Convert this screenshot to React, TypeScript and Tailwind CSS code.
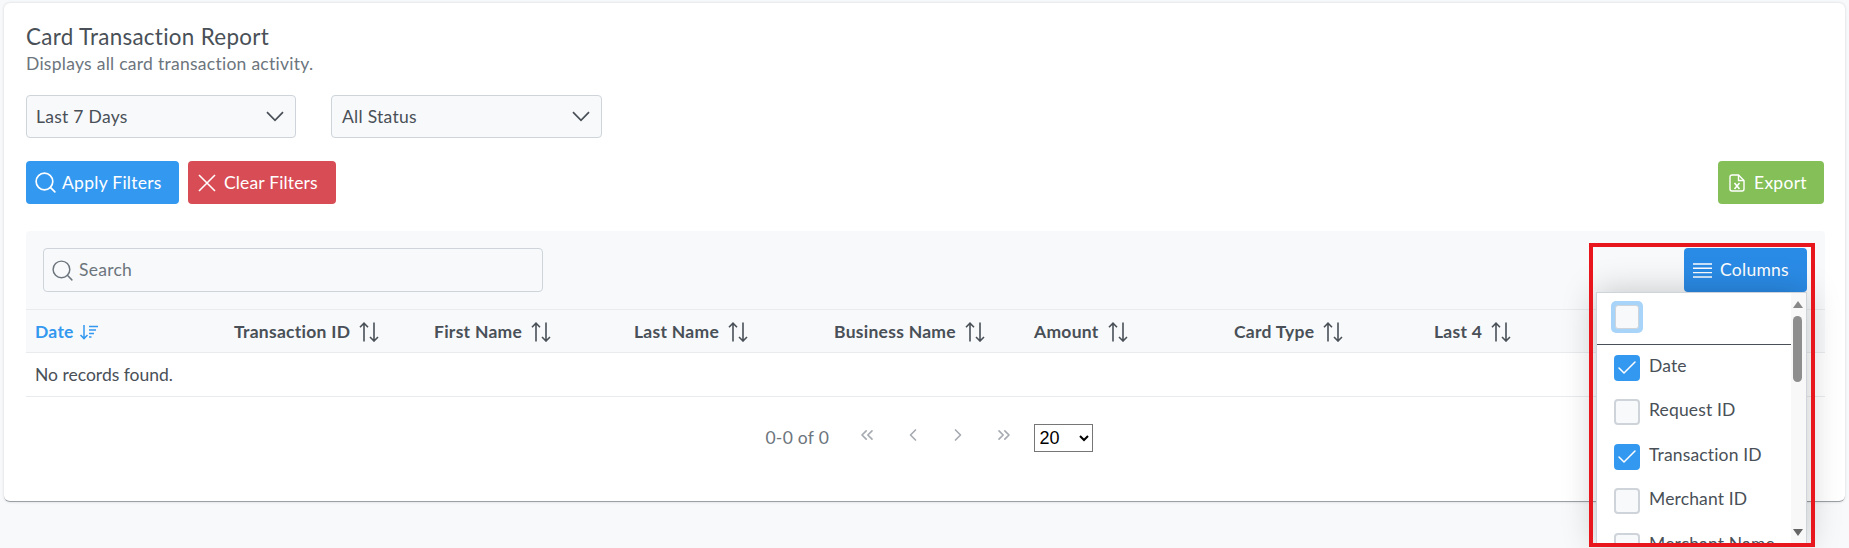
import React from "react";
import { Search, ChevronsLeft, ChevronLeft, ChevronRight, ChevronsRight, Check } from "lucide-react";

function SortIcon() {
  return (
    <svg width="20" height="20" viewBox="0 0 20 20" fill="none" stroke="currentColor" strokeWidth="1.6" className="ml-[9px] shrink-0">
      <path d="M5 19.5V1M1 5.2 5 1.2 9 5.2" />
      <path d="M15 .5V19M11 15l4 4 4-4" />
    </svg>
  );
}

function SortedIcon() {
  return (
    <svg width="20" height="16" viewBox="0 0 20 16" fill="none" stroke="currentColor" strokeWidth="1.5" className="ml-[5px] shrink-0">
      <path d="M5 1v13.5M1.5 11 5 14.6 8.5 11" />
      <path d="M10 2.5h9M10 6h7M10 9.5h5M10 13h2.5" />
    </svg>
  );
}

function ExcelIcon() {
  return (
    <svg width="16" height="18" viewBox="0 0 16 18" fill="none" stroke="currentColor" strokeWidth="1.4">
      <path d="M9.5 1H3a2 2 0 0 0-2 2v12a2 2 0 0 0 2 2h10a2 2 0 0 0 2-2V6.5z" />
      <path d="M9.5 1v5.5H15" />
      <path d="M5.5 9l5 6M10.5 9l-5 6" strokeWidth="1.6" />
    </svg>
  );
}

function Caret() {
  return (
    <svg width="18" height="11" viewBox="0 0 18 11" fill="none" stroke="currentColor" strokeWidth="1.7" className="text-[#495057]">
      <path d="M1 1.2 9 9.4l8-8.2" />
    </svg>
  );
}

function FakeSelect({ label, w, pl }: { label: string; w: string; pl: string }) {
  return (
    <div className={`${w} ${pl} h-[43px] flex items-center justify-between pr-[11px] bg-[#f8f9fb] border border-[#ced4da] rounded-[4px] text-[#495057]`}>
      <span className="pt-[2px]">{label}</span>
      <Caret />
    </div>
  );
}

const cols = ["Transaction ID", "First Name", "Last Name", "Business Name", "Amount", "Card Type", "Last 4"];

function Box({ checked }: { checked?: boolean }) {
  return (
    <div className={`w-[26px] h-[26px] shrink-0 rounded-[4px] flex items-center justify-center border-2 ${checked ? "bg-[#3398ef] border-[#3398ef]" : "bg-[#f8f9fb] border-[#ced4da]"}`}>
      {checked && <Check size={24} strokeWidth={1.5} className="text-white shrink-0" />}
    </div>
  );
}

const items: [string, boolean][] = [
  ["Date", true],
  ["Request ID", false],
  ["Transaction ID", true],
  ["Merchant ID", false],
];

export default function App() {
  return (
    <div className="w-[1849px] h-[548px] overflow-hidden bg-[#f8f9fb] pt-[3px] pl-[4px] pr-[4px] text-[17.5px] tracking-[0.27px] text-[#495057] relative font-['Lato',sans-serif]">
      <div className="h-[499px] bg-white rounded-[6px] border-b border-[#9aa0a6] shadow-[0_0_3px_rgba(0,0,0,0.15)] pt-[21px] px-[22px]">
        <h1 className="text-[22.4px] leading-[25px] tracking-[0.3px] text-[#495057]">Card Transaction Report</h1>
        <p className="text-[17.5px] leading-[24px] mt-[3px] text-[#6c757d]">Displays all card transaction activity.</p>

        <div className="flex gap-[35px] mt-[19px]">
          <FakeSelect label="Last 7 Days" w="w-[270px]" pl="pl-[9px]" />
          <FakeSelect label="All Status" w="w-[271px]" pl="pl-[10px]" />
        </div>

        <div className="flex mt-[23px] h-[43px]">
          <button className="w-[153px] flex items-center pl-[7px] gap-[4px] bg-[#3398ef] text-white rounded-[4px]">
            <Search size={25} strokeWidth={1.6} /> <span className="pt-[2px]">Apply Filters</span>
          </button>
          <button className="ml-[9px] w-[148px] flex items-center pl-[10px] gap-[8px] tracking-[0.15px] bg-[#d84c55] text-white rounded-[4px]">
            <svg width="18" height="18" viewBox="0 0 18 18" fill="none" stroke="currentColor" strokeWidth="1.6"><path d="M1 1l16 16M17 1 1 17" /></svg>
            <span className="pt-[2px]">Clear Filters</span>
          </button>
          <button className="ml-auto mr-[-1px] w-[106px] flex items-center pl-[11px] gap-[9px] bg-[#84bf58] text-white rounded-[4px]">
            <ExcelIcon /> <span className="pt-[2px]">Export</span>
          </button>
        </div>

        <div className="mt-[27px] bg-[#f8f9fb] rounded-t-[4px] h-[78px] flex items-center justify-between pl-[17px] pr-[18px] w-[1799px]">
          <div className="w-[500px] h-[44px] flex items-center gap-[4px] pl-[6px] border border-[#ced4da] rounded-[4px] text-[#6c757d]">
            <Search size={25} strokeWidth={1.4} />
            <span className="pt-[1px]">Search</span>
          </div>
          <button className="w-[123px] h-[44px] flex items-center pl-[9px] gap-[8px] bg-[#2a8be6] text-white rounded-[4px]">
            <svg width="19" height="15" viewBox="0 0 19 15" stroke="currentColor" strokeWidth="1.4"><path d="M0 1h19M0 5.3h19M0 9.6h19M0 14h19" /></svg>
            <span className="pt-[1px]">Columns</span>
          </button>
        </div>

        <div className="w-[1799px] h-[44px] flex items-center bg-[#f8f9fb] border-y border-[#e9ecef] font-bold text-[#495057] pt-[2px]">
          <div className="w-[200px] pl-[9px] flex items-center text-[#3398ef]">Date<SortedIcon /></div>
          {cols.map((c) => (
            <div key={c} className="w-[200px] pl-[8px] flex items-center">{c}<SortIcon /></div>
          ))}
        </div>
        <div className="w-[1799px] h-[44px] flex items-center pl-[9px] pt-[1px] tracking-normal border-b border-[#e9ecef]">No records found.</div>

        <div className="flex items-center justify-center w-[1799px] mt-[27px] h-[28px] text-[#6c757d] pl-[7px]">
          <span className="mr-[28px]">0-0 of 0</span>
          <div className="flex items-center gap-[25.5px] text-[#a6abb1] mr-[20px] -mt-[7px]">
            <ChevronsLeft size={20} />
            <ChevronLeft size={20} />
            <ChevronRight size={20} />
            <ChevronsRight size={20} />
          </div>
          <select defaultValue="20" className="w-[59px] h-[28px] border border-[#767676] text-black bg-white pl-[1px] tracking-normal font-['Liberation_Sans',sans-serif] text-[18px]">
            <option>20</option>
          </select>
        </div>
      </div>

      {/* column menu */}
      <div className="absolute left-[1596px] top-[292px] w-[211px] h-[253px] bg-white border border-[#ced4da] overflow-hidden tracking-[0.15px] shadow-[0_0_32px_rgba(0,0,0,0.22)]">
        <div className="h-[52px] mr-[15px] border-b border-[#495057] pl-[14px] pt-[8px]">
          <div className="w-[32px] h-[32px] rounded-[5px] bg-[#a9d4f9] p-[4px]">
            <div className="w-full h-full rounded-[3px] bg-[#f8f9fb] border border-[#ced4da]" />
          </div>
        </div>
        <div className="pl-[17px] pt-[10px] flex flex-col gap-[18.4px]">
          {items.map(([t, c]) => (
            <div key={t} className="flex items-start gap-[9px] h-[26px]">
              <Box checked={c} />
              <span className="leading-[22px]">{t}</span>
            </div>
          ))}
          <div className="flex items-start gap-[9px] h-[12px] overflow-hidden">
            <Box />
            <span className="leading-[22px] whitespace-nowrap">Merchant Name</span>
          </div>
        </div>
        <div className="absolute right-0 top-0 bottom-0 w-[15px] bg-[#f8f8f8]">
          <div className="absolute top-[8px] left-[2px] w-0 h-0 border-x-[5px] border-x-transparent border-b-[7px] border-b-[#888]" />
          <div className="absolute top-[23px] left-[2px] w-[9px] h-[66px] rounded-full bg-[#8e8e8e]" />
          <div className="absolute bottom-[8px] left-[2px] w-0 h-0 border-x-[5px] border-x-transparent border-t-[7px] border-t-[#666]" />
        </div>
      </div>

      {/* highlight annotation */}
      <div className="absolute left-[1589px] top-[243px] w-[226px] h-[304px] border-[4px] border-[#e8161d] pointer-events-none" />
    </div>
  );
}
